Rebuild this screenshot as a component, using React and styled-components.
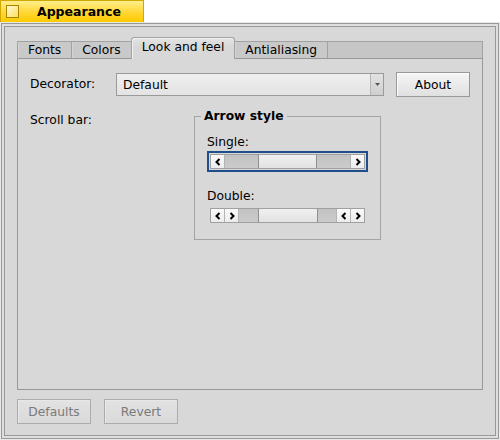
import React from 'react';
import styled, { createGlobalStyle } from 'styled-components';

const GlobalStyle = createGlobalStyle`
  html, body {
    margin: 0;
    padding: 0;
    background: #ffffff;
  }
  body {
    font-family: "DejaVu Sans", "Noto Sans", sans-serif;
    font-size: 12.3px;
    color: #000;
  }
`;

const Screen = styled.div`
  width: 500px;
  height: 440px;
  display: flex;
  flex-direction: column;
`;

const TitleTab = styled.div`
  box-sizing: border-box;
  width: 144px;
  height: 22px;
  display: flex;
  align-items: center;
  padding-left: 5px;
  border: 1px solid #d2a800;
  border-bottom: none;
  background: linear-gradient(#ffef8c, #ffd633 55%, #ffcb00);
`;

const TitleIcon = styled.div`
  box-sizing: border-box;
  width: 13px;
  height: 13px;
  border: 1px solid #a88400;
  background: linear-gradient(135deg, #fff9d6, #ffdf5e);
`;

const TitleText = styled.span`
  margin-left: 18px;
  font-weight: bold;
  font-size: 12.5px;
`;

const WindowFrame = styled.div`
  flex: 1;
  display: flex;
  border: 1px solid #e8e8e8;
  min-height: 0;
`;

const FrameBand = styled.div`
  flex: 1;
  display: flex;
  border: 1px solid #989898;
  padding: 2px;
  background: #dedede;
  min-height: 0;
`;

const Body = styled.div`
  flex: 1;
  display: flex;
  flex-direction: column;
  gap: 9px;
  border: 1px solid #989898;
  background: #d8d8d8;
  padding: 10px 12px 11px 12px;
  min-height: 0;
`;

const TabView = styled.div`
  flex: 1;
  display: flex;
  flex-direction: column;
  min-height: 0;
`;

const TabStrip = styled.div`
  height: 21px;
  display: flex;
  align-items: flex-end;
`;

const Tab = styled.div`
  box-sizing: border-box;
  position: relative;
  display: flex;
  align-items: center;
  padding: 0 10px;
  border: 1px solid #a2a2a2;
  border-bottom: none;
  margin-right: -1px;
  height: ${p => (p.$active ? '22px' : '17px')};
  margin-bottom: ${p => (p.$active ? '-1px' : '0')};
  z-index: ${p => (p.$active ? 1 : 0)};
  padding-bottom: ${p => (p.$active ? '3px' : '0')};
  border-radius: ${p => (p.$active ? '3px 3px 0 0' : '0')};
  background: ${p =>
    p.$active ? 'linear-gradient(#e4e4e4, #d8d8d8 40%)' : '#c9c9c9'};
  box-shadow: ${p => (p.$active ? 'inset 1px 1px 0 #f0f0f0' : 'inset 1px 0 0 #d4d4d4')};
`;

const TabFiller = styled.div`
  box-sizing: border-box;
  flex: 1;
  height: 17px;
  border: 1px solid #a2a2a2;
  border-bottom: none;
  background: #c6c6c6;
`;

const TabContent = styled.div`
  flex: 1;
  border: 1px solid #989898;
  padding: 13px 12px;
  display: flex;
  flex-direction: column;
`;

const Row = styled.div`
  display: flex;
  align-items: ${p => p.$align || 'center'};
  margin-top: ${p => p.$top || 0}px;
`;

const Label = styled.div`
  width: ${p => p.$width}px;
  flex-shrink: 0;
  line-height: 15px;
  padding-top: ${p => p.$pad || 0}px;
`;

const MenuField = styled.div`
  box-sizing: border-box;
  flex: 1;
  height: 23px;
  display: flex;
  border: 1px solid #9a9a9a;
  background: linear-gradient(#efefef, #e3e3e3);
`;

const MenuText = styled.div`
  flex: 1;
  display: flex;
  align-items: center;
  padding-left: 6px;
`;

const MenuArrow = styled.div`
  width: 12px;
  display: flex;
  align-items: center;
  justify-content: center;
  border-left: 1px solid #b6b6b6;
  background: linear-gradient(#e2e2e2, #cfcfcf);
`;

const Button = styled.div`
  box-sizing: border-box;
  width: 74px;
  height: 25px;
  flex-shrink: 0;
  display: flex;
  align-items: center;
  justify-content: center;
  margin-left: ${p => p.$gap || 0}px;
  border: 1px solid ${p => (p.$disabled ? '#acacac' : '#9a9a9a')};
  color: ${p => (p.$disabled ? '#7a7a7a' : '#000')};
  background: ${p =>
    p.$disabled
      ? 'linear-gradient(#e2e2e2, #dadada)'
      : 'linear-gradient(#f6f6f6, #e0e0e0)'};
  box-shadow: inset 1px 1px 0 ${p => (p.$disabled ? '#e8e8e8' : '#fbfbfb')};
`;

const GroupBox = styled.fieldset`
  box-sizing: border-box;
  width: 187px;
  min-width: 0;
  margin: 0;
  padding: 0 12px 13px 12px;
  border: 1px solid #a4a4a4;
`;

const Legend = styled.legend`
  padding: 0 3px;
  margin-left: -6px;
  font-weight: bold;
  line-height: 15px;
`;

const Caption = styled.div`
  line-height: 15px;
  margin-top: ${p => p.$top}px;
`;

const FocusRing = styled.div`
  margin-top: 1px;
  border: 2px solid ${p => (p.$focused ? '#1e4f8c' : 'transparent')};
  padding: 1px;
`;

const ScrollBar = styled.div`
  box-sizing: border-box;
  height: 15px;
  display: flex;
  border: 1px solid #a0a0a0;
  background: #c8c8c8;
`;

const ArrowButton = styled.div`
  width: ${p => p.$w || 13}px;
  flex-shrink: 0;
  display: flex;
  align-items: center;
  justify-content: center;
  background: linear-gradient(#fafafa, #ececec);
  border-right: ${p => (p.$side === 'left' ? '1px solid #b4b4b4' : 'none')};
  border-left: ${p => (p.$side === 'right' ? '1px solid #b4b4b4' : 'none')};
`;

const Track = styled.div`
  flex: 1;
  background: linear-gradient(#c2c2c2, #cbcbcb);
`;

const Thumb = styled.div`
  box-sizing: border-box;
  width: ${p => p.$w}px;
  flex-shrink: 0;
  border-left: 1px solid #8e8e8e;
  border-right: 1px solid #8e8e8e;
  background: linear-gradient(#f0f0f0, #e2e2e2);
`;

const Chevron = ({ dir }) => (
  <svg width="6" height="8" viewBox="0 0 6 8">
    <path
      d={dir === 'left' ? 'M4.5 1 L1.5 4 L4.5 7' : 'M1.5 1 L4.5 4 L1.5 7'}
      fill="none"
      stroke="#000"
      strokeWidth="2"
    />
  </svg>
);

const DownTriangle = () => (
  <svg width="5" height="3" viewBox="0 0 5 3">
    <path d="M0 0 L5 0 L2.5 3 Z" fill="#555" />
  </svg>
);

const SingleBar = ({ focused }) => (
  <FocusRing $focused={focused}>
    <ScrollBar>
      <ArrowButton $side="left">
        <Chevron dir="left" />
      </ArrowButton>
      <Track />
      <Thumb $w={59} />
      <Track />
      <ArrowButton $side="right">
        <Chevron dir="right" />
      </ArrowButton>
    </ScrollBar>
  </FocusRing>
);

const DoubleBar = ({ focused }) => (
  <FocusRing $focused={focused}>
    <ScrollBar>
      <ArrowButton $side="left">
        <Chevron dir="left" />
      </ArrowButton>
      <ArrowButton $side="left">
        <Chevron dir="right" />
      </ArrowButton>
      <Track />
      <Thumb $w={60} />
      <Track />
      <ArrowButton $side="right">
        <Chevron dir="left" />
      </ArrowButton>
      <ArrowButton $side="right">
        <Chevron dir="right" />
      </ArrowButton>
    </ScrollBar>
  </FocusRing>
);

const tabs = ['Fonts', 'Colors', 'Look and feel', 'Antialiasing'];

const App = () => (
  <Screen>
    <GlobalStyle />
    <TitleTab>
      <TitleIcon />
      <TitleText>Appearance</TitleText>
    </TitleTab>
    <WindowFrame>
      <FrameBand>
        <Body>
          <TabView>
            <TabStrip>
              {tabs.map(t => (
                <Tab key={t} $active={t === 'Look and feel'}>
                  {t}
                </Tab>
              ))}
              <TabFiller />
            </TabStrip>
            <TabContent>
              <Row>
                <Label $width={86}>Decorator:</Label>
                <MenuField>
                  <MenuText>Default</MenuText>
                  <MenuArrow>
                    <DownTriangle />
                  </MenuArrow>
                </MenuField>
                <Button $gap={12}>About</Button>
              </Row>
              <Row $align="flex-start" $top={12}>
                <Label $width={164} $pad={4}>
                  Scroll bar:
                </Label>
                <GroupBox>
                  <Legend>Arrow style</Legend>
                  <Caption $top={11}>Single:</Caption>
                  <SingleBar focused />
                  <Caption $top={17}>Double:</Caption>
                  <DoubleBar />
                </GroupBox>
              </Row>
            </TabContent>
          </TabView>
          <Row>
            <Button $disabled>Defaults</Button>
            <Button $disabled $gap={13}>
              Revert
            </Button>
          </Row>
        </Body>
      </FrameBand>
    </WindowFrame>
  </Screen>
);

export default App;
